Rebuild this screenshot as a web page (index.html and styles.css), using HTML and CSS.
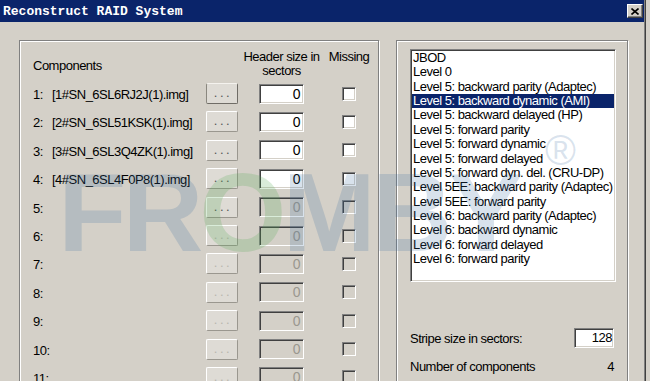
FILE: index.html
```html
<!DOCTYPE html>
<html lang="en">
<head>
<meta charset="utf-8">
<title>Reconstruct RAID System</title>
<link rel="stylesheet" href="styles.css">
</head>
<body>
<div class="window">
  <div class="titlebar">
    <span class="title">Reconstruct RAID System</span>
    <span class="close"><svg width="8" height="7" viewBox="0 0 8 7"><path d="M0.5 0.5 L7.5 6.5 M7.5 0.5 L0.5 6.5" stroke="#000" stroke-width="1.6" fill="none"/></svg></span>
  </div>
  <div class="content">
    <section class="group group-left">
      <div class="components">
        <div class="h-comp">Components</div>
        <div></div>
        <div class="h-center h-size"><span>Header size in<br>sectors</span></div>
        <div class="h-center h-miss"><span>Missing</span></div>

        <div class="num">1:</div><div class="file">[1#SN_6SL6RJ2J(1).img]</div><div class="btn default">...</div><div class="field">0</div><div class="check"></div>
        <div class="num">2:</div><div class="file">[2#SN_6SL51KSK(1).img]</div><div class="btn">...</div><div class="field">0</div><div class="check"></div>
        <div class="num">3:</div><div class="file">[3#SN_6SL3Q4ZK(1).img]</div><div class="btn">...</div><div class="field">0</div><div class="check"></div>
        <div class="num">4:</div><div class="file">[4#SN_6SL4F0P8(1).img]</div><div class="btn">...</div><div class="field">0</div><div class="check"></div>
        <div class="num">5:</div><div class="file"></div><div class="btn">...</div><div class="field off">0</div><div class="check off"></div>
        <div class="num">6:</div><div class="file"></div><div class="btn off">...</div><div class="field off">0</div><div class="check off"></div>
        <div class="num">7:</div><div class="file"></div><div class="btn off">...</div><div class="field off">0</div><div class="check off"></div>
        <div class="num">8:</div><div class="file"></div><div class="btn off">...</div><div class="field off">0</div><div class="check off"></div>
        <div class="num">9:</div><div class="file"></div><div class="btn off">...</div><div class="field off">0</div><div class="check off"></div>
        <div class="num">10:</div><div class="file"></div><div class="btn off">...</div><div class="field off">0</div><div class="check off"></div>
        <div class="num">11:</div><div class="file"></div><div class="btn off">...</div><div class="field off">0</div><div class="check off"></div>
      </div>
    </section>
    <section class="group group-right">
      <div class="listbox">
        <div class="item">JBOD</div>
        <div class="item">Level 0</div>
        <div class="item">Level 5: backward parity (Adaptec)</div>
        <div class="item selected">Level 5: backward dynamic (AMI)</div>
        <div class="item">Level 5: backward delayed (HP)</div>
        <div class="item">Level 5: forward parity</div>
        <div class="item">Level 5: forward dynamic</div>
        <div class="item">Level 5: forward delayed</div>
        <div class="item">Level 5: forward dyn. del. (CRU-DP)</div>
        <div class="item">Level 5EE: backward parity (Adaptec)</div>
        <div class="item">Level 5EE: forward parity</div>
        <div class="item">Level 6: backward parity (Adaptec)</div>
        <div class="item">Level 6: backward dynamic</div>
        <div class="item">Level 6: forward delayed</div>
        <div class="item">Level 6: forward parity</div>
      </div>
      <div class="stripe">
        <span>Stripe size in sectors:</span>
        <span class="field stripe-field">128</span>
      </div>
      <div class="count">
        <span>Number of components</span>
        <span>4</span>
      </div>
    </section>
  </div>
  <div class="watermark">FR<span class="wm-o">O</span>MBY</div>
  <div class="wm-reg">®</div>
</div>
</body>
</html>
```
FILE: styles.css
```css
html, body {
  margin: 0;
  padding: 0;
}
body {
  background: #d4d0c8;
  width: 650px;
  height: 381px;
  overflow: hidden;
  font-family: "Liberation Sans", Arial, sans-serif;
  font-size: 13px;
  letter-spacing: -0.5px;
  color: #000;
}
.window {
  position: relative;
  width: 644px;
  height: 381px;
  border-right: 1px solid #808080;
  box-shadow: 1px 0 0 #404040;
  overflow: hidden;
}
.titlebar {
  height: 22px;
  background: #0a246a;
  display: flex;
  align-items: center;
  justify-content: space-between;
  padding: 0 1px 0 3px;
}
.title {
  font-family: "Liberation Mono", monospace;
  font-weight: bold;
  font-size: 13px;
  letter-spacing: 0;
  color: #fff;
}
.close {
  width: 16px;
  height: 14px;
  box-sizing: border-box;
  background: #d4d0c8;
  border: 1px solid;
  border-color: #fff #404040 #404040 #fff;
  box-shadow: inset -1px -1px 0 #808080;
  display: flex;
  align-items: center;
  justify-content: center;
}
.content {
  display: flex;
  gap: 17px;
  padding: 18px 0 0 19px;
}
.group {
  box-sizing: border-box;
  height: 400px;
  border: 1px solid #808080;
  box-shadow: inset 1px 1px 0 #fff, 1px 1px 0 #fff;
}
.group-left {
  width: 360px;
  padding: 9px 0 0 13px;
}
.group-right {
  width: 232px;
  padding: 8px 0 0 13px;
  display: flex;
  flex-direction: column;
}
.components {
  display: grid;
  grid-template-columns: 19px 154px 53px 83px 14px;
  grid-template-rows: 29.4px;
  grid-auto-rows: 28.4px;
  align-items: center;
}
.h-comp {
  grid-column: 1 / 3;
  padding-top: 1px;
}
.h-center {
  align-self: start;
  display: flex;
  justify-content: center;
  white-space: nowrap;
  text-align: center;
  line-height: 14px;
}
.h-size { width: 45px; }
.h-miss { width: 14px; }
.num, .file {
  padding-top: 2px;
  line-height: 15px;
  white-space: nowrap;
}
.btn {
  width: 32px;
  height: 21px;
  box-sizing: border-box;
  background: #dedbd5;
  border: 1px solid;
  border-color: #fff #9a978f #9a978f #fff;
  border-radius: 2px;
  text-align: center;
  line-height: 17px;
  letter-spacing: 2.5px;
  padding-left: 2px;
  color: #555;
}
.btn.default {
  border-color: #f4f2ee #6f6c66 #6f6c66 #8a877f;
}
.btn.off {
  color: #b8b5ae;
}
.field {
  width: 45px;
  height: 20px;
  box-sizing: border-box;
  background: #fff;
  border: 1px solid;
  border-color: #808080 #fff #fff #808080;
  box-shadow: inset 1px 1px 0 #404040, inset -1px -1px 0 #d4d0c8;
  text-align: right;
  padding-right: 3px;
  line-height: 18px;
  font-size: 14px;
}
.field.off {
  background: #d4d0c8;
  color: #9a978f;
}
.check {
  width: 14px;
  height: 14px;
  box-sizing: border-box;
  background: #fff;
  border: 1px solid;
  border-color: #808080 #fff #fff #808080;
  box-shadow: inset 1px 1px 0 #404040, inset -1px -1px 0 #d4d0c8;
}
.check.off {
  background: #d4d0c8;
}
.listbox {
  width: 206px;
  height: 233px;
  box-sizing: border-box;
  background: #fff;
  border: 1px solid;
  border-color: #808080 #fff #fff #808080;
  box-shadow: inset 1px 1px 0 #404040, inset -1px -1px 0 #d4d0c8;
  padding: 1px 1px 0 1px;
}
.item {
  height: 14.36px;
  line-height: 14.36px;
  padding-left: 1px;
  white-space: nowrap;
}
.item.selected {
  background: #0a246a;
  color: #fff;
}
.stripe {
  margin-top: 46px;
  width: 204px;
  height: 20px;
  display: flex;
  align-items: center;
  justify-content: space-between;
}
.stripe-field {
  width: 40px;
  padding-right: 1px;
  font-size: 13px;
}
.count {
  margin-top: 12px;
  width: 204px;
  height: 14px;
  line-height: 14px;
  display: flex;
  justify-content: space-between;
}
.watermark {
  position: absolute;
  left: 58px;
  top: 157px;
  font-family: "Liberation Sans", Arial, sans-serif;
  font-weight: bold;
  font-size: 112px;
  line-height: 1;
  letter-spacing: -4px;
  color: rgba(60, 110, 160, 0.2);
  pointer-events: none;
}
.wm-o {
  color: rgba(80, 170, 80, 0.22);
}
.wm-reg {
  position: absolute;
  left: 545px;
  top: 130px;
  font-family: "Liberation Sans", Arial, sans-serif;
  font-size: 42px;
  line-height: 1;
  color: rgba(60, 110, 160, 0.2);
  pointer-events: none;
}
```
